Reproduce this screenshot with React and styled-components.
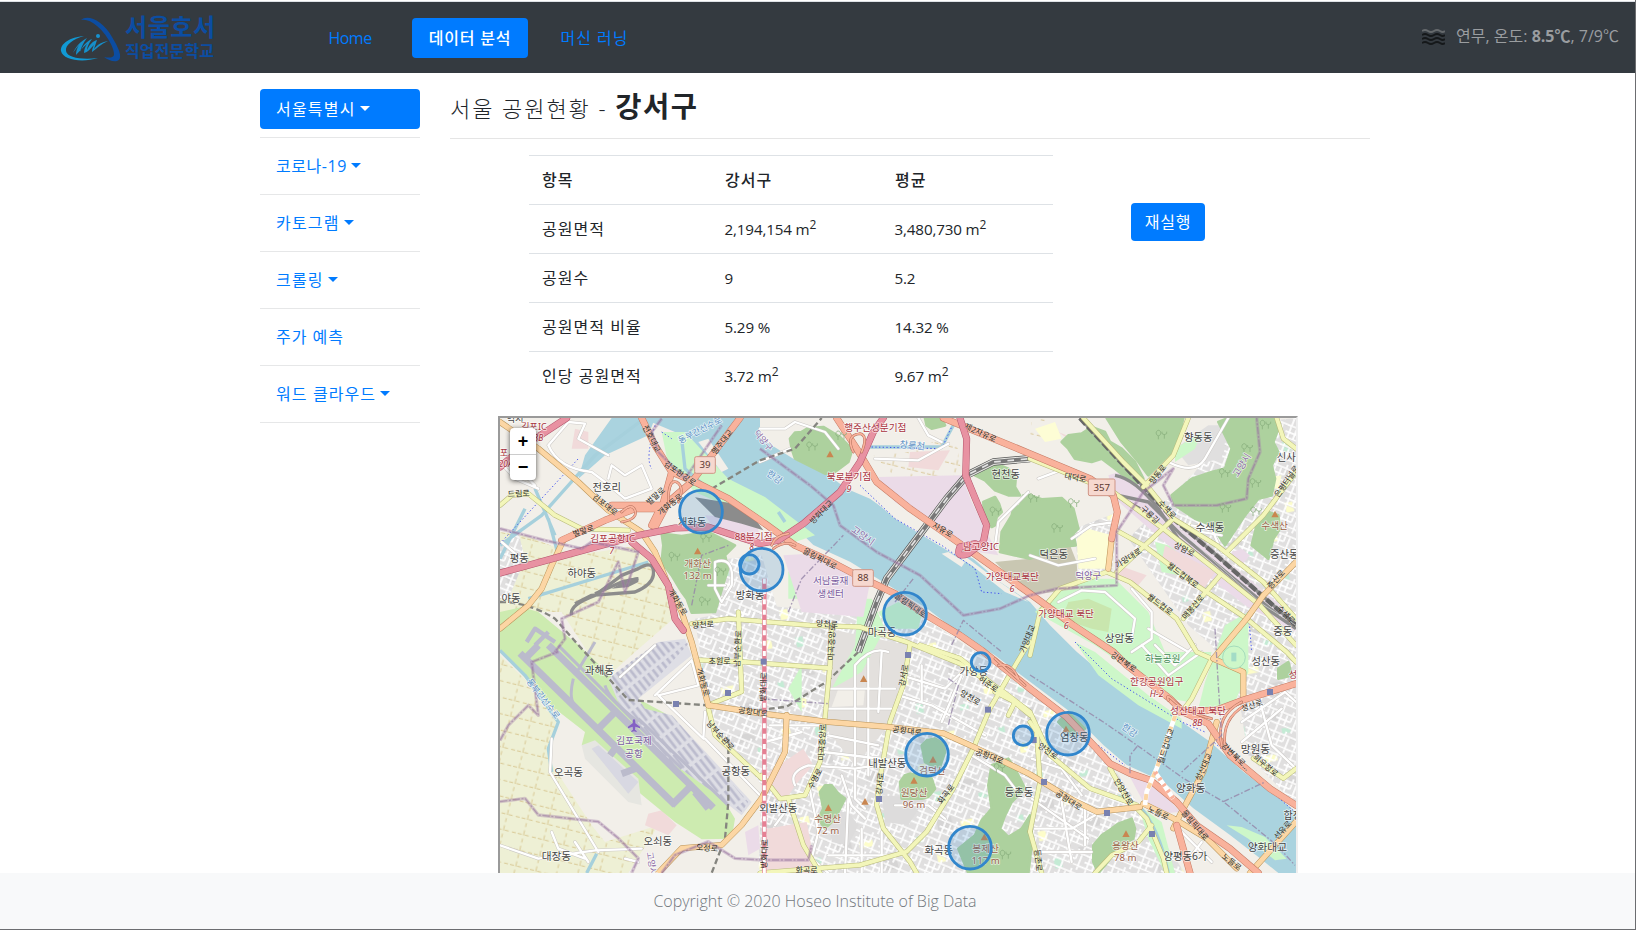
import React from 'react';
import styled, { createGlobalStyle } from 'styled-components';

const GlobalStyle = createGlobalStyle`
  * { box-sizing: border-box; }
  body {
    margin: 0;
    background: #fff;
    color: #212529;
    font: 350 16px/24px "Open Sans", "Noto Sans CJK KR", sans-serif;
    overflow: hidden;
  }
`;

const Page = styled.div`
  width: 1636px;
  height: 930px;
  display: flex;
  flex-direction: column;
  border-right: 1px solid #6c6d70;
  border-bottom: 1px solid #6c6d70;
`;
const TopStrip = styled.div`
  flex: none;
  height: 2px;
  border-bottom: 1px solid #dee1e6;
`;
const Navbar = styled.nav`
  flex: none;
  height: 71px;
  display: flex;
  align-items: flex-start;
  padding: 0 16px 0 60px;
  background: #343a40;
`;
const Logo = styled.svg`
  width: 156px;
  height: 50px;
  margin-top: 11px;
  overflow: visible;
`;
const NavList = styled.div`
  display: flex;
  margin: 16px 0 0 97px;
`;
const NavItem = styled.a`
  height: 40px;
  width: ${(p) => p.$w}px;
  margin-right: ${(p) => p.$gap || 0}px;
  padding: 8px 0;
  text-align: center;
  white-space: nowrap;
  border-radius: 4px;
  font-weight: ${(p) => (p.$active ? 500 : 400)};
  letter-spacing: ${(p) => p.$ls || 0}px;
  color: ${(p) => (p.$active ? '#fff' : '#007bff')};
  background: ${(p) => (p.$active ? '#007bff' : 'transparent')};
`;
const Weather = styled.div`
  margin: 22px 0 0 auto;
  display: flex;
  align-items: center;
  color: #9a9da0;
  font-weight: 400;
  white-space: nowrap;
  letter-spacing: 0px;
  svg { margin: 2px 11px 0 0; }
`;
const Body = styled.div`
  flex: 1;
  min-height: 0;
  overflow: hidden;
  display: flex;
  gap: 30px;
  padding: 16px 0 0 260px;
`;
const Sidebar = styled.aside`
  width: 160px;
  flex: none;
`;
const SideLink = styled.a`
  display: flex;
  align-items: center;
  height: 40px;
  padding: 0 16px;
  border-radius: 4px;
  font-weight: 400;
  letter-spacing: ${(p) => p.$ls ?? 1.2}px;
  white-space: nowrap;
  color: ${(p) => (p.$active ? '#fff' : '#007bff')};
  background: ${(p) => (p.$active ? '#007bff' : 'transparent')};
`;
const Caret = styled.span`
  margin: -2px 0 0 4px;
  border-top: 5px solid currentColor;
  border-left: 5px solid transparent;
  border-right: 5px solid transparent;
`;
const Divider = styled.hr`
  margin: 8px 0;
  border: 0;
  border-top: 1px solid #e6e7e8;
`;
const Main = styled.main`
  width: 920px;
  flex: none;
`;
const Title = styled.h3`
  margin: 0;
  height: 50px;
  display: flex;
  align-items: baseline;
  border-bottom: 1px solid #e5e5e5;
  font-size: 22px;
  font-weight: 300;
  line-height: 34px;
  letter-spacing: 1.95px;
  white-space: pre;
  strong { font-size: 28.5px; font-weight: 700; letter-spacing: 1.6px; }
`;
const StatsRow = styled.div`
  display: flex;
  align-items: flex-start;
  padding: 16px 0 0 79px;
  height: 277px;
`;
const Table = styled.table`
  width: 524px;
  table-layout: fixed;
  border-collapse: collapse;
`;
const Cell = styled.td`
  width: ${(p) => p.$w}px;
  height: 49px;
  padding: 0 12px 0 ${(p) => (p.$label ? 13 : 12.5)}px;
  border-top: 1px solid #dee2e6;
  font-size: ${(p) => (p.$label ? 16 : 15.2)}px;
  font-weight: ${(p) => (p.$head ? 500 : 400)};
  letter-spacing: ${(p) => (p.$label ? 1.05 : -0.15)}px;
  white-space: nowrap;
  sup { position: relative; top: -6px; vertical-align: baseline; font-size: 12px; line-height: 0; }
`;
const RunButton = styled.button`
  margin: 48px 0 0 78px;
  width: 74px;
  height: 38px;
  padding: 0 0 2px;
  border: 0;
  border-radius: 4px;
  font: 400 16px/24px "Noto Sans CJK KR", sans-serif;
  letter-spacing: 0.8px;
  color: #fff;
  background: #007bff;
`;
const MapFrame = styled.div`
  position: relative;
  width: 800px;
  height: 500px;
  margin-left: 48px;
  border: 2px solid #9a9a9a;
  border-right-color: #eee;
`;
const MapSvg = styled.svg`
  display: block;
  width: 796px;
  height: 455px;
  font-family: "Noto Sans", "Noto Sans CJK KR", sans-serif;
  font-weight: 400;
`;
const ZoomControl = styled.div`
  position: absolute;
  left: 10px;
  top: 10px;
  width: 26px;
  border-radius: 4px;
  background: #fff;
  box-shadow: 0 1px 5px rgba(0, 0, 0, 0.65);
`;
const ZoomButton = styled.div`
  height: 26px;
  text-align: center;
  font: 700 18px/26px "Liberation Sans", sans-serif;
  color: #000;
  & + & { border-top: 1px solid #ccc; line-height: 24px; }
`;
const Footer = styled.footer`
  flex: none;
  height: 56px;
  padding-right: 5px;
  line-height: 57px;
  text-align: center;
  background: #f8f9fa;
  color: #73787d;
  letter-spacing: 0px;
`;

/* ---- map data, in thirds of a pixel ---- */
const farms = [
  '15,360 90,370 240,430 440,400 500,460 535,620 420,720 330,800 200,600 15,600',
  '15,730 190,900 160,1040 290,1240 330,1290 490,1240 400,1383 15,1383',
];
const residential = [
  '600,620 810,580 1000,600 1290,620 1610,830 1850,1060 2070,1383 790,1383 800,1120 640,900',
  '700,440 800,430 850,600 640,640',
  '2020,260 2100,180 2200,40 2403,18 2403,1180 2260,1030 2230,850 2150,700 2080,640 1900,380',
  '1740,350 1870,300 1850,490 1750,480',
  '15,400 70,360 90,440 40,560 15,560',
];
const forests = [
  '500,365 560,372 640,360 720,400 690,430 700,470 690,500 672,560 660,600 590,602 575,560 560,540 530,490 500,450 505,400',
  '885,80 900,62 920,60 940,48 985,45 1010,60 1035,75 1060,100 1068,125 1060,150 1020,180 990,185 960,170 900,140 890,110',
  '1290,18 1340,18 1350,40 1310,50 1295,40',
  '1440,190 1460,165 1490,150 1515,160 1540,170 1562,200 1560,225 1575,250 1540,250 1500,235 1470,205',
  '1465,270 1500,255 1512,275 1520,300 1505,315 1500,340 1490,345 1468,320',
  '1515,420 1520,360 1550,310 1555,290 1575,280 1585,250 1605,250 1640,262 1700,258 1735,290 1750,350 1735,365 1742,400 1690,405 1605,440 1560,430',
  '1700,90 1720,70 1760,65 1790,45 1830,60 1845,90 1880,110 1920,150 1945,200 1920,218 1860,170 1820,140 1790,150 1740,140 1720,110',
  '1835,18 2065,18 2055,60 2040,110 2010,140 1960,190 1930,150 1880,90',
  '2170,30 2200,18 2345,18 2350,50 2335,90 2350,120 2330,160 2340,200 2330,250 2290,260 2250,310 2190,400 2150,340 2100,320 2040,280 2030,250 2090,200 2150,180 2190,170 2210,110',
  '2290,320 2320,300 2350,310 2355,350 2335,380 2320,440 2270,400',
  '1215,1110 1230,1090 1245,1085 1310,1100 1320,1130 1300,1155 1280,1160 1220,1160',
  '975,1140 990,1120 1010,1120 1030,1145 1050,1160 1035,1190 1020,1220 1000,1240 990,1250 970,1220 985,1190',
  '1280,1000 1295,985 1320,980 1345,995 1350,1020 1335,1065 1310,1060 1290,1050',
  '1490,1060 1540,1040 1560,1070 1590,1130 1550,1170 1530,1210 1515,1250 1540,1275 1580,1250 1605,1210 1612,1280 1600,1383 1420,1383 1390,1310 1440,1270 1460,1225 1490,1190 1480,1120',
  '1795,1300 1820,1270 1850,1250 1870,1235 1910,1220 1920,1250 1915,1280 1880,1300 1860,1320 1830,1360 1810,1383 1795,1350',
  '1690,930 1720,900 1770,950 1730,970', '2350,770 2380,750 2390,790 2350,800',
];
const parks = [
  '500,60 570,60 700,200 810,255 960,370 900,390 780,320 600,240 520,160',
  '1620,600 1680,540 1770,500 1860,500 1960,600 2010,720 2150,720 2130,780 2080,870 2030,860 1800,700',
  '2190,640 2260,600 2260,780 2210,890 2110,890 2130,810',
  '1930,1180 2000,1230 2040,1383 2010,1383 1960,1280',
  '1740,690 1800,720 1960,850 2060,920 2060,950 1930,880 1810,790',
  '1150,600 1210,570 1280,610 1270,650 1180,650',
  '1090,560 1130,560 1170,650 1100,780 1010,830 1080,700',
  '880,480 900,440 960,480 950,560 880,560',
  '880,830 920,760 920,900', '1980,390 2100,420 2110,500 2000,480',
  '2040,110 2120,60 2100,110 2040,150',
];
const pinks = [
  ['#ebdbe8', '865,430 940,425 1125,510 1105,615 920,600'],
  ['#ebdbe8', '1150,195 1400,190 1430,270 1510,430 1450,420 1340,360 1200,270'],
  ['#ebdbe8', '1840,190 1890,175 1960,220 2060,330 2380,600 2403,660 2250,580 2020,400 1860,260'],
  ['#ebdbe8', '1905,1095 1975,1110 2055,1200 1990,1205 1945,1170'],
  ['#ebdbe8', '630,310 780,320 800,390 650,340'],
  ['#ebdbe8', '2210,420 2240,410 2265,430 2240,460 2215,450'],
  ['#ebdbe8', '750,1260 790,1240 795,1310 760,1330'],
  ['#f1dada', '815,1085 925,1010 955,1060 900,1120 870,1170 840,1160'],
  ['#f1dada', '815,1250 935,1230 965,1383 815,1383'],
  ['#f1dada', '460,1205 500,1195 545,1240 520,1270 450,1240'],
  ['#f1dada', '1245,120 1365,115 1330,175 1240,165'],
  ['#f1dada', '2010,400 2160,480 2120,540 2000,450'],
  ['#f1dada', '1870,460 1955,490 1930,520 1870,495'],
  ['#f1dada', '240,50 280,60 280,110 230,110'],
  ['#f1dada', '1690,60 1840,120 1810,140 1760,110'],
  ['#c9c7b2', '1500,450 1605,440 1725,400 1745,450 1750,530 1600,550'],
  ['#fdfdd5', '1745,380 1780,350 1850,370 1840,470 1750,470'],
  ['#fdfdd5', '1620,50 1680,30 1700,80 1650,90'],
  ['#fdfdd5', '2290,200 2360,190 2350,230 2295,230'],
];
const motorways = [
  'M15 483L300 405 430 370 540 348 640 345 700 365 795 395 850 385 925 335 1035 240 1095 150 1135 60 1165 18',
  'M15 165L90 100 215 18',
  'M1395 18L1415 80 1412 190 1445 270 1475 340 1465 390 1420 425Q1380 440 1395 405L1440 395',
  'M410 390L470 440 520 520 540 620 565 655',
];
const trunks = [
  'M440 18L480 100 530 180 600 210 700 260 810 335 900 400 1000 445 1095 495 1200 545 1295 610 1395 670 1460 715 1605 830 1715 915 1805 1010 1845 1055 1905 1084 1965 1104 2045 1170 2105 1240 2205 1310 2290 1383',
  'M1025 18L1085 110 1145 210 1245 290 1345 360 1445 430 1605 545 1735 640 1855 720 1895 760 2025 860 2065 900 2140 935 2205 1030 2325 1130 2403 1180',
  'M735 18L590 210 520 270 480 345', 'M1345 18L1605 125 1785 200 1855 250 1867 300 1850 380',
  'M200 385L330 325 420 290 500 290 530 180', 'M2055 900L2165 894 2245 864 2403 815',
  'M2045 1240L2085 1383', 'M350 280H500L470 340',
];
const primaries = [
  'M15 30L130 110 250 210 340 295 440 360 480 420 520 520 560 600 590 690 640 880',
  'M205 385L170 460 140 530 100 580 15 650',
  'M640 880L795 904 995 929 1175 944 1345 964 1445 1009 1605 1087 1735 1165 1805 1199 1935 1185',
  'M490 1383L560 1309 680 1299 740 1239 800 1159 870 1020 875 909', 'M2403 1229L2265 1383',
  'M2165 930L2125 1079 2055 1209 2035 1249', 'M1945 1175L2035 1219 2135 1279 2225 1369',
  'M2403 450L2305 550 2255 620 2155 740 2245 780V860', 'M1850 380L1840 470',
];
const secondaries = [
  'M15 280L50 250 100 245 180 310 260 350 400 355',
  'M590 635L700 620 945 640 1095 645 1235 690 1395 755 1525 839 1605 900 1665 1029 1785 1129 1925 1179',
  'M1010 640L1005 760 988 940 975 1050 930 1150 855 1160 800 1090',
  'M1245 699L1225 819 1185 929 1155 1099 1145 1179 1165 1249 1245 1349 1265 1383',
  'M1605 690L1585 719 1485 889 1435 1009 1375 1129 1295 1259 1235 1319 1095 1359 795 1383',
  'M1275 699L1395 739 1495 819 1605 909', 'M880 1160L925 1299 975 1383',
  'M640 889L660 969 800 1099M640 879L740 839 730 600M610 744L740 749 1005 769',
  'M1765 18L1885 150 1955 220 2035 320 2165 400 2305 510 2403 620',
  'M2080 18L2035 130 1945 225M1605 140L1855 240 2005 350 2145 460 2295 580 2403 700',
  'M1855 350L1945 400 2105 520 2255 620 2375 720 2403 750M2035 320L1865 480',
  'M1605 730L1635 600 1695 530 1835 480 1905 510 2045 620 2105 720 2150 740 2090 860 2060 900',
  'M2195 420L2305 310 2403 180M2345 18L2365 80 2403 110M2065 620L2175 490',
  'M1845 1069L1895 1159 1955 1219 2005 1339 2015 1383M1605 1259L1635 1110 1625 960 1605 930',
  'M2275 1039L2365 1099 2403 1070', 'M1605 1259L1640 1383M1800 1383L1850 1330 1930 1290 1970 1240', 'M1500 840L1560 870 1540 910',
];
const whites = [
  'M160 100Q190 170 290 180L330 210 390 260 470 230 440 160 390 190 350 160 340 200M160 100L220 30 270 35 250 80 340 130M15 150L60 200 130 230M80 180L120 220M20 390L90 450 50 480',
  'M170 980L165 1080 310 1320M15 1300L130 1340 300 1315 440 1310M170 1260L190 1310 270 1340M240 1290L280 1350M390 1340L430 1350',
  'M480 850L590 745 610 820 490 850 625 980 630 900M630 980L800 1155M375 795L480 700',
  'M640 520H690M660 450Q720 430 710 520L680 570 660 530Z',
  'M795 50H870L900 30 990 60 1030 110M795 150L885 110',
  'M1140 140L1270 145 1360 95M1270 18L1300 70 1340 90',
  'M1605 430L1690 460 1800 440M1730 380L1790 340 1860 330M1630 200L1710 170 1780 210M1500 400L1510 330 1600 240',
  'M2020 150Q2100 190 2130 140L2200 18M2180 420L2150 350 2090 340M2060 350L2180 370',
  'M1690 570L1760 535 1830 540 1920 620 1910 680M1910 530L1970 600V680L1910 720M1980 699L2040 760 2100 699M1940 699L2020 790 2120 720M1960 650L2080 720',
  'M825 940H980M810 990L920 960M870 1200L840 1240M900 1120Q880 1080 940 1060L1080 1070 1140 1060M1080 760V1060M1120 740V1090M1160 720L1150 900M1000 830H1200M985 890H1190M1000 970L1150 1000M985 1020L1240 1050M1080 760Q1130 700 1180 720M1080 1070V1160L1110 1190',
  'M1210 850L1310 880 1470 970M1220 790L1350 830 1400 780M1280 870V760M1340 930L1400 790M1200 1180H1300L1350 1220M1430 1030L1530 1090 1560 1130',
  'M940 1110L970 1260 950 1340 1000 1383M1040 1090L1070 1180 1110 1220M1000 1330H1200M1060 1160L1050 1383M1100 1250V1383M1160 1260V1383',
  'M1610 1160L1780 1280M1620 1250H1730L1800 1210M1620 1320H1790M1700 1170L1730 1350M1770 1190L1770 1300M1610 1040L1700 1070 1760 1150M1630 970L1700 1030',
  'M2290 850L2330 1000 2403 1070M2240 930L2370 840 2403 870M2240 990L2360 890M2050 1250L2150 1350M2090 1330L2120 1290',
];
const doubleRails = [
  'M1090 720L1145 570 1175 500 1235 420 1355 260 1415 190 1495 150 1605 140',
];
const sideRails = ['M1605 140L1805 220 1935 290'];
const yardRails = [
  'M1755 18L1905 180 2035 320 2165 430 2403 640',
  'M1860 190Q1920 200 1990 290L2050 380 2300 580 2403 650',
  'M1870 250L1960 270 2060 370 2350 610',
  'M230 610Q220 580 300 550L380 490 430 470Q480 440 475 490 470 520 420 540L290 550 240 575',
  'M300 545L380 510 430 500',
];
const depots = ['600,256 700,272 780,320 805,355 740,335 660,315', '350,530 400,500 430,495 430,510 400,525'];
const tunnels = ['M15 570Q100 570 180 620L250 699 400 864 640 880', 'M1090 720L995 809 875 884 795 894', 'M700 980V1170L690 1280 650 1383', 'M650 230L795 145 900 110 980 18'];
const borders = [
  'M795 110L945 220 1015 280 1035 340 1145 420 1275 490 1405 610 1515 590 1605 550 1685 530 1865 520 1865 360 1945 240 2035 170 2005 220 2035 280 2165 280 2255 260 2260 200 2295 120 2285 18',
  'M15 350L150 385 260 410 290 390 430 420 390 540 370 450 310 570 200 620 210 680 180 720',
  'M15 1169L90 1159 130 1209 310 1229 370 1279 430 1339 410 1383', 'M500 1383L540 1329 640 1289 720 1339 800 1344H940L950 1300',
  'M15 985L40 940 100 880 130 910 110 750 190 719', 'M500 20L470 60 490 120 570 200 680 40',
];
const dashBorders = ['M1605 789L1825 930 1925 999 2065 1099 2185 1169 2345 1299 2400 1360', 'M880 600L920 500 1045 370', 'M1200 570L1255 500M1370 699L1405 625 1520 720', 'M2160 650L2170 820 2180 970 2060 1080', 'M795 860L1000 875', 'M1905 1084V1030L1930 999M2185 1169L2310 1110', 'M590 580L620 430 700 400', 'M1360 800L1390 820 1360 940'];
const streams = ['M15 715L90 790 190 930 160 1010 170 1080', 'M15 440L90 290M15 400L140 310 300 130 450 18', 'M100 560L460 450M160 320L190 430M305 1325L275 1383M120 230L180 370', 'M1120 105L1340 105 1375 40', 'M1930 1180Q1990 1240 2020 1383', 'M850 300L870 330M560 80L570 170 650 240'];
const runways = ['M75 724L540 1179', 'M160 699L655 1187', 'M90 740L130 700M310 950L360 900M530 1180L590 1120M380 1085L420 1070M600 1140L640 1190M345 1030L360 1010'];
const taxis = ['M190 700L560 1070M235 800Q220 860 240 880M240 790L300 690M330 820Q340 860 430 930M430 920L700 1180'];

const K = '#444', M = '#a93240', P = '#7a5ca0', B = '#9b624a';
const labels = [
  ['전호리', 335, 227, 31, K], ['평동', 73, 439, 31, K], ['하야동', 260, 484, 31, K], ['야동', 48, 560, 31, K], ['개화동', 591, 330, 31, K],
  ['방화동', 765, 549, 31, K], ['현천동', 1532, 187, 31, K], ['덕은동', 1676, 428, 31, K], ['향동동', 2110, 76, 31, K], ['신사', 2374, 136, 31, K],
  ['수색동', 2145, 345, 31, K], ['증산동', 2368, 427, 31, K], ['중동', 2363, 657, 31, K], ['상암동', 1873, 677, 32, K], ['마곡동', 1161, 660, 31, K],
  ['과해동', 313, 773, 32, K], ['오곡동', 220, 1079, 32, K], ['공항동', 722, 1079, 31, K], ['오쇠동', 488, 1289, 31, K], ['대장동', 184, 1331, 32, K],
  ['외발산동', 850, 1190, 31, K], ['내발산동', 1177, 1054, 31, K], ['가양동', 1436, 779, 31, K], ['등촌동', 1572, 1142, 31, K], ['화곡동', 1331, 1314, 31, K],
  ['염창동', 1738, 976, 31, K], ['성산동', 2312, 747, 31, K], ['망원동', 2281, 1010, 32, K], ['양화동', 2087, 1128, 32, K], ['양화대교', 2317, 1306, 32, K],
  ['양평동6가', 2071, 1332, 31, K], ['합정', 2393, 1211, 30, K], ['역시', 60, 20, 28, K],
  ['김포IC', 117, 44, 27, M], ['8B', 130, 79, 25, M], ['포', 27, 121, 27, M], ['20A', 32, 157, 25, M], ['김포공항IC', 353, 380, 29, M], ['7', 350, 417, 27, M],
  ['88분기점', 776, 373, 29, M], ['8', 770, 405, 25, M], ['행주산성분기점', 1141, 48, 29, M], ['북로분기점', 1062, 194, 29, M], ['9', 1062, 230, 27, M],
  ['남고양IC', 1458, 403, 29, M], ['가양대교북단', 1552, 494, 29, M], ['6', 1551, 530, 27, M], ['가양대교 북단', 1713, 605, 29, M], ['6', 1714, 641, 27, M],
  ['한강공원입구', 1985, 808, 29, M], ['H-2', 1985, 845, 27, M], ['성산대교 북단', 2109, 896, 29, M], ['8B', 2107, 933, 27, M], ['성', 2394, 789, 27, M],
  ['서남물재', 1007, 505, 29, P], ['생센터', 1007, 546, 29, P], ['김포국제', 417, 986, 29, P], ['공항', 417, 1024, 29, P], ['덕양구', 1780, 490, 28, P],
  ['개화산', 608, 454, 29, B], ['132 m', 608, 491, 29, B], ['수색산', 2339, 341, 29, B], ['수명산', 998, 1220, 29, B], ['72 m', 999, 1257, 29, B],
  ['원당산', 1257, 1142, 29, B], ['96 m', 1257, 1179, 29, B], ['검덕산', 1312, 1077, 29, B], ['봉제산', 1472, 1310, 29, B], ['117 m', 1472, 1347, 29, B],
  ['용왕산', 1891, 1301, 29, B], ['78 m', 1891, 1338, 29, B], ['하늘공원', 2003, 741, 29, '#438b57'],
  ['동부간선수로', 615, 54, 26, '#5c90c6', -27], ['한강', 839, 195, 27, '#5c90c6', 35], ['창릉천', 1252, 100, 28, '#5c90c6', 5], ['한강', 1904, 955, 27, '#5c90c6', 35],
  ['고양시', 1104, 371, 28, '#8b6ba5', 35], ['고양시', 2240, 159, 28, '#8b6ba5', -58], ['덕양구', 805, 85, 26, '#8b6ba5', 50], ['동부간선수로', 145, 860, 26, '#5c90c6', 52], ['고양시', 470, 1355, 26, '#8b6ba5', 80],
];
const roadLabels = [
  ['드림로', 71, 245, -3], ['벌말로', 265, 357, -18], ['김포대로', 330, 278, 38], ['벌말로', 482, 252, -42], ['개화동로', 525, 277, -38], ['전호대교', 470, 80, 62],
  ['김포한강로', 555, 184, 35], ['행주대교', 681, 90, -52], ['방화대교', 979, 300, -45], ['올림픽대로', 975, 440, 27], ['자유로', 1343, 354, 30], ['제2자유로', 1456, 62, 25],
  ['올림픽대로', 1247, 580, 35], ['개화동로', 548, 570, 60], ['양천로', 624, 638, -4], ['양천로', 996, 635, 2], ['마곡중앙로', 1010, 690, -88], ['초원로', 674, 747, 0],
  ['개화동로', 624, 810, 75], ['공항대로', 774, 899, 8], ['남부순환로', 676, 970, 48], ['방화대로', 805, 825, -88], ['오정로', 636, 1308, 4], ['강서로', 1226, 790, -80],
  ['허준로', 1480, 816, 35], ['양천로', 1426, 857, 30], ['마곡중앙로', 981, 990, -87], ['공항대로', 1236, 956, 7], ['공항대로', 1484, 1033, 20], ['강서로', 1155, 1115, -85],
  ['수명로', 960, 1100, -63], ['화곡로', 1353, 1146, -53], ['방화대로', 808, 1325, -88], ['화곡로', 935, 1374, 0], ['강변북로', 1886, 750, 35], ['성산로', 2271, 880, -18],
  ['월드컵대교', 2013, 1002, -72], ['성산대교', 2126, 1065, -65], ['강변북로…', 2222, 1034, 44], ['희우정로', 2312, 1060, 40], ['양천로', 1659, 1017, 35], ['공항대로', 1721, 1165, 33],
  ['안양천로', 1886, 1140, 60], ['노들로', 1990, 1203, 25], ['올림픽대로', 2100, 1240, 50], ['노들로', 2210, 1350, 38], ['선유로', 2363, 1254, -48], ['등촌로', 1630, 1345, 85],
  ['대덕로', 1741, 197, 10], ['구룡길', 1965, 308, 43], ['수색로', 2016, 292, 47], ['향동로', 1988, 187, -52], ['가양대로', 1900, 438, -32], ['상암로', 2068, 412, 27],
  ['월드컵북로', 2064, 490, 37], ['월드컵로', 1995, 577, 37], ['매봉산로', 2094, 585, -50], ['증산로', 2343, 502, -48], ['은평터널로', 2375, 208, -55], ['수색로', 2373, 608, 45],
  ['남부순환로', 728, 710, -88], ['가양대교', 1597, 680, -68],
];
const markers = [[618, 299, 65], [763, 457, 30], [800, 473, 65], [1230, 605, 65], [1457, 750, 29], [1584, 971, 30], [1296, 1028, 65], [1719, 965, 65], [1425, 1307, 65]];
const stations = [[543, 876], [699, 843], [806, 749], [1239, 729], [1479, 893], [1152, 1161], [1616, 984], [1647, 1110], [1836, 1203], [1971, 1266], [2325, 840]];
const peaks = [[608, 418], [1005, 127], [2340, 307], [1106, 801], [1000, 1188], [1257, 1106], [1110, 1169], [1314, 1043], [1468, 1276], [1713, 952], [1893, 1266]];
const shields = [['39', 630, 159, 62], ['88', 1104, 498, 62], ['357', 1820, 226, 80]];
const trees = [[632, 380], [537, 436], [628, 570], [950, 105], [1037, 72], [675, 480], [1735, 275], [1685, 350], [1500, 300], [1998, 70], [2188, 185], [2255, 110], [2190, 290], [2280, 215], [2310, 40], [1512, 1070], [2282, 300], [1615, 260], [1530, 1330]];

function Roads({ list, casing, color, width, edge = 3 }) {
  return (
    <g fill="none" strokeLinejoin="round" strokeLinecap="round">
      {list.map((d) => <path key={d} d={d} stroke={casing} strokeWidth={width + edge} />)}
      {list.map((d) => <path key={d + 'f'} d={d} stroke={color} strokeWidth={width} />)}
    </g>
  );
}
const Areas = ({ list, fill }) => <g fill={fill}>{list.map((p) => <polygon key={p} points={p} />)}</g>;
const Lines = ({ list, ...rest }) => <g fill="none" strokeLinejoin="round" {...rest}>{list.map((d) => <path key={d} d={d} />)}</g>;

function CityMap() {
  return (
    <MapSvg viewBox="15 18 2388 1365">
      <defs>
        <pattern id="streets" width="74" height="62" patternUnits="userSpaceOnUse" patternTransform="rotate(22)">
          <path d="M0 12H74M0 32H45M0 49H74M12 0V62M30 12V49M45 0V32M59 12V62" stroke="#fff" strokeWidth="5" fill="none" />
          <path d="M12 12H74M12 49H59" stroke="#c9c5c3" strokeWidth="1" fill="none" transform="translate(0 3)" />
        </pattern>
        <pattern id="lots" width="310" height="270" patternUnits="userSpaceOnUse" patternTransform="rotate(-12)">
          <path d="M20 30h28v26H20zM180 140h40v20h-40zM90 220h24v30H90z" fill="#fdfdca" />
          <path d="M120 40h22v30h-22zM40 160h18v18H40zM250 70h26v16h-26z" fill="#c4ebd5" />
          <path d="M200 20h50v26h-50zM110 120h46v40h-46zM240 200h40v40h-40z" fill="#d6d5d5" />
        </pattern>
        <pattern id="fields" width="62" height="48" patternUnits="userSpaceOnUse" patternTransform="rotate(14)">
          <path d="M0 10H62M18 0V48" stroke="#cdb373" strokeWidth="2" strokeDasharray="12 10" fill="none" />
        </pattern>
        <pattern id="aprons" width="18" height="60" patternUnits="userSpaceOnUse" patternTransform="rotate(-38)">
          <path d="M5 0V50" stroke="#bbbbcd" strokeWidth="8" />
        </pattern>
      </defs>
      <rect x="15" y="18" width="2388" height="1365" fill="#f2efe9" />
      <Areas list={farms} fill="#eef0d5" />
      <Areas list={farms} fill="url(#fields)" />
      <Areas list={['1135,130 1245,120 1380,60 1400,190 1200,195', '1610,30 1650,18 1640,120 1605,80']} fill="url(#fields)" />
      <Areas list={residential} fill="#e0dfdf" />
      <Areas list={residential} fill="url(#lots)" />
      <Areas list={residential} fill="url(#streets)" />
      <polygon points="1000,650 1240,700 1190,930 1080,1060 985,940" fill="#e3e0dd" />
      <polygon points="1030,830 1110,830 1105,880 1010,885" fill="#f2efe9" />
      <polygon points="1160,1150 1290,1160 1240,1240 1170,1230" fill="#dddcdc" />
      <polygon points="1000,1200 1060,1200 1090,1240 1060,1300 1010,1290" fill="#dddcdc" />
      <polygon points="2040,110 2140,40 2200,40 2180,140 2080,160" fill="#e0dfdf" />
      <Areas list={['440,18 795,18 795,78 895,140 995,185 1055,230 1125,260 1195,310 1265,360 1355,400 1435,440 1515,510 1605,570 1665,640 1745,719 1805,770 1905,829 2045,919 2145,989 2245,1079 2365,1169 2403,1200 2403,1383 2350,1383 2295,1339 2205,1269 2095,1189 2005,1109 1895,1059 1825,999 1725,899 1605,809 1500,730 1395,665 1295,589 1195,529 1065,449 955,399 880,325 795,262 700,200 600,120 540,60', '270,130 350,18 480,18 460,70 330,130 250,200']} fill="#aad3df" />
      <Areas list={parks} fill="#cdf7c9" />
      <Areas list={['2195,1240 2240,1245 2310,1275 2375,1340 2340,1345 2260,1280']} fill="#cdf7c9" />
      <Areas list={['610,90 640,80 700,170 680,180', '1340,425 1360,420 1410,450 1400,465', '1060,200 1100,230 1200,280 1380,410 1500,500 1600,570 1530,540 1430,460 1200,320']} fill="#f2efe9" />
      {pinks.map(([c, p]) => <polygon key={p} points={p} fill={c} />)}
      <g stroke="#add19e" strokeWidth="8" strokeLinejoin="round"><Areas list={forests} fill="#add19e" /></g>
      <Areas list={['1720,570 1780,560 1850,590 1840,660 1790,650 1700,620']} fill="#c9e6ae" />
      <polygon points="15,600 80,585 130,600 250,699 410,850 540,920 720,1220 710,1280 620,1282 540,1230 260,1000 270,960 180,890 15,720" fill="#cdebb0" />
      <polygon points="260,1000 300,985 430,1100 440,1180 400,1170 270,1040" fill="#e6e6e1" />
      <polygon points="290,1010 310,1000 430,1110 400,1145" fill="#d8d8e2" />
      <polygon points="340,800 490,690 570,680 590,730 430,860 450,890 530,910 770,1170 740,1210 640,1130 500,1030 370,870" fill="#dedee5" />
      <polygon points="350,790 490,690 585,690 430,860 450,890 530,910 760,1170 740,1200 640,1130 500,1030 370,870" fill="url(#aprons)" />
      <Lines list={taxis} stroke="#bbbbcc" strokeWidth="9" />
      <Lines list={['M95 690L120 650 180 690M120 700L160 660']} stroke="#bbbbcc" strokeWidth="13" />
      <Lines list={runways} stroke="#bbbbcc" strokeWidth="21" />
      <Lines list={streams} stroke="#a6d0dc" strokeWidth="10" />
      <Lines list={['M15 395L250 140M480 40Q450 140 470 170M500 60L530 80M1095 220L1200 320 1340 400 1440 470 1460 540 1520 545M1740 690L1850 800 2060 930 2130 960M2260 600L2270 720M1810 1000L1890 1060M2150 985L2400 1200M1130 105L1340 110 1370 45']} stroke="#4454ef" strokeWidth="3" strokeDasharray="4 7" />
      <Roads list={whites} casing="#cbc8c5" color="#fff" width={7} />
      <Lines list={tunnels} stroke="#85857f" strokeWidth="7" strokeDasharray="18 10" />
      <Areas list={depots} fill="#8c8c8c" />
      <Lines list={yardRails} stroke="#8c8c8c" strokeWidth="10" />
      <Lines list={['M1755 18L1905 180 2035 320 2165 430 2403 640']} stroke="#666" strokeWidth="14" strokeDasharray="26 8" />
      <Lines list={['M1765 18L1915 180 2045 320 2175 430 2403 630', 'M2060 360L2300 575 2403 640']} stroke="#ddd" strokeWidth="2" />
      <Lines list={sideRails} stroke="#777" strokeWidth="10" />
      <Lines list={sideRails} stroke="#ddd" strokeWidth="2" />
      <Lines list={doubleRails} stroke="#555" strokeWidth="22" />
      <Lines list={doubleRails} stroke="#e8e8e4" strokeWidth="18" />
      <Lines list={doubleRails} stroke="#777" strokeWidth="12" />
      <Lines list={doubleRails} stroke="#e4e4e4" strokeWidth="5" strokeDasharray="20 20" />
      <Roads list={secondaries} casing="#b6b878" color="#f3f6ba" width={12} />
      <Roads list={primaries} casing="#b99358" color="#fcd6a4" width={15} />
      <Roads list={trunks} casing="#c47a63" color="#f9b29c" width={18} />
      <Roads list={motorways} casing="#b2536b" color="#e892a2" width={18} />
      <Roads
        list={['M1075 120Q1050 70 1095 65 1120 70 1100 120', 'M830 400Q840 370 880 365M835 410Q870 385 900 400', 'M520 270Q520 200 545 210 570 225 550 270M380 300Q410 270 420 295T380 330', 'M2020 865Q2010 840 2040 870T2150 920', 'M2180 1000Q2160 910 2240 870M2190 1000Q2180 920 2250 880', 'M1500 740L1590 820M1510 760Q1550 750 1570 800']}
        casing="#b5705c" color="#f9b29c" width={5}
      />
      <Lines list={['M2041 910L1985 1069 1955 1139 1950 1179M1980 1080L2035 1160']} stroke="#fff" strokeWidth="14" />
      <Lines list={['M2041 910L1985 1069 1955 1139 1950 1179']} stroke="#fcd6a4" strokeWidth="12" strokeDasharray="18 18" />
      <Lines list={['M1980 1080L2035 1160']} stroke="#f9b29c" strokeWidth="14" strokeDasharray="8 14" />
      <Lines list={borders} stroke="#a583ab" strokeOpacity=".4" strokeWidth="10" />
      <Lines list={borders} stroke="#94709c" strokeOpacity=".5" strokeWidth="4" strokeDasharray="22 5 6 5" />
      <Lines list={dashBorders} stroke="#9584a8" strokeOpacity=".8" strokeWidth="4" strokeDasharray="18 6 5 6" />
      <path d="M808 500V1383" stroke="#e57f93" strokeWidth="13" />
      <path d="M808 500V1383" stroke="#fff" strokeWidth="9" strokeDasharray="15 16" />
      <circle cx="2217" cy="736" r="34" fill="#cdf7c9" stroke="#a5dcbc" strokeWidth="3" />
      <rect x="2209" y="722" width="15" height="26" fill="#a3dcc6" />
      <g fill="none" stroke="#86ad7b" strokeWidth="2.2">
        {trees.map(([x, y]) => <path key={x + '-' + y} d={`M${x - 8} ${y + 12}v-11a7 8 0 1 1 1 0M${x + 10} ${y + 10}v-13m-7-8v6q7 6 14 0v-6`} />)}
      </g>
      <g fill="#c98650">{peaks.map(([x, y]) => <path key={x} d={`M${x} ${y - 11}l11 20h-22z`} />)}</g>
      <g fill="#7981b0">{stations.map(([x, y]) => <rect key={x} x={x - 9} y={y - 9} width="18" height="18" />)}</g>
      <path d="M417 922c4 0 4 6 4 12l14 10v5l-14-5-1 9 5 4v3l-8-2-8 2v-3l5-4-1-9-14 5v-5l14-10c0-6 0-12 4-12z" fill="#8461c4" />
      {shields.map(([t, x, y, w]) => (
        <g key={t}>
          <rect x={x - w / 2} y={y - 25} width={w} height="50" rx="5" fill="#f6d8cf" stroke="#cf9585" strokeWidth="3" />
          <text x={x} y={y + 10} textAnchor="middle" fontSize="29" fill="#5d392f">{t}</text>
        </g>
      ))}
      <g textAnchor="middle" fontSize="24" fill="#2b2a22" stroke="#fff" strokeOpacity=".25" strokeWidth="3" paintOrder="stroke">
        {roadLabels.map(([t, x, y, r], i) => <text key={i} transform={`translate(${x} ${y}) rotate(${r})`} y="8.5">{t}</text>)}
      </g>
      <g textAnchor="middle" stroke="#fff" strokeOpacity=".65" strokeWidth="5" strokeLinejoin="round" paintOrder="stroke">
        {labels.map(([t, x, y, s, c, r], i) => (
          <text key={i} transform={`translate(${x} ${y}) rotate(${r || 0})`} y={s * 0.36} fontSize={s} fill={c} fontStyle={c === M && /^[0-9A-Z-]+$/.test(t) ? 'italic' : 'normal'}>{t}</text>
        ))}
      </g>
      <g fill="#3186cc" fillOpacity=".2" stroke="#3186cc" strokeWidth="8.5">
        {markers.map(([x, y, r]) => <circle key={x} cx={x} cy={y} r={r - 1} />)}
      </g>
    </MapSvg>
  );
}

function SchoolLogo() {
  return (
    <Logo viewBox="0 0 156 50">
      <path d="M21 7C28 1 43 8 52 24c8 13 11 22 5 24-4 1-9-1-13-4 5 1 9 1 10-2 1-6-8-22-17-29C31 8 26 6 21 7z" fill="#0c4da2" />
      <path d="M24 23C10 24 0 31 1 38c2 9 21 12 37 7-15 2-31 0-32-7-1-6 7-12 18-15z" fill="#1199d4" />
      <path d="M13 40c3-7 8-12 14-15-4 5-6 10-7 14 3-7 7-11 12-13-3 4-5 8-5 11 3-6 6-9 10-10l-3 9c4-5 8-7 14-8-7 3-12 8-16 11 0-3 1-5 2-7-4 4-6 7-10 8 0-3 1-6 3-9-5 4-8 8-11 11 0-4 1-7 3-10-2 2-4 5-6 8z" fill="#168fca" />
      <circle cx="38" cy="23" r="2" fill="#1692d0" />
      <g fill="#0c4da2" fontFamily="Noto Sans CJK KR" fontWeight="700">
        <text x="65" y="23" fontSize="24" textLength="90">서울호서</text>
        <text x="65" y="44" fontSize="16" textLength="89">직업전문학교</text>
      </g>
    </Logo>
  );
}

const menu = [['서울특별시', true], ['코로나-19', true, 0.55], ['카토그램', true], ['크롤링', true], ['주가 예측', false, 1], ['워드 클라우드', true, 1.1]];
const rows = [
  ['공원면적', '2,194,154 m', '3,480,730 m', true],
  ['공원수', '9', '5.2'],
  ['공원면적 비율', '5.29 %', '14.32 %'],
  ['인당 공원면적', '3.72 m', '9.67 m', true],
];

export default function App() {
  return (
    <>
      <GlobalStyle />
      <Page>
        <TopStrip />
        <Navbar>
          <SchoolLogo />
          <NavList>
            <NavItem $w={74} $gap={25} $ls={-0.5}>Home</NavItem>
            <NavItem $w={116} $gap={17} $active $ls={0.8}>데이터 분석</NavItem>
            <NavItem $w={99} $ls={1}>머신 러닝</NavItem>
          </NavList>
          <Weather>
            <svg width="23" height="16" viewBox="0 0 23 16" fill="none" strokeWidth="1.8">
              <path d="M0 2q3-2 6 0t6 0 6 0 5 0" stroke="#65696c" />
              <path d="M0 6q3-2 6 0t6 0 6 0 5 0M0 10q3-2 6 0t6 0 6 0 5 0M0 14q3-2 6 0t6 0 6 0 5 0" stroke="#15181a" />
            </svg>
            <span>연무, 온도: <b>8.5℃</b>, 7/9℃</span>
          </Weather>
        </Navbar>
        <Body>
          <Sidebar>
            {menu.map(([t, caret, ls], i) => (
              <React.Fragment key={t}>
                <SideLink $active={i === 0} $ls={ls}>{t}{caret && <Caret />}</SideLink>
                <Divider />
              </React.Fragment>
            ))}
          </Sidebar>
          <Main>
            <Title>서울 공원현황 - <strong>강서구</strong></Title>
            <StatsRow>
              <Table>
                <tbody>
                  <tr>
                    <Cell as="th" align="left" $w={183} $label $head>항목</Cell>
                    <Cell as="th" align="left" $w={170} $label $head>강서구</Cell>
                    <Cell as="th" align="left" $w={171} $label $head>평균</Cell>
                  </tr>
                  {rows.map(([n, a, b, sup]) => (
                    <tr key={n}>
                      <Cell $label>{n}</Cell>
                      <Cell>{a}{sup && <sup>2</sup>}</Cell>
                      <Cell>{b}{sup && <sup>2</sup>}</Cell>
                    </tr>
                  ))}
                </tbody>
              </Table>
              <RunButton>재실행</RunButton>
            </StatsRow>
            <MapFrame>
              <CityMap />
              <ZoomControl>
                <ZoomButton>+</ZoomButton>
                <ZoomButton>−</ZoomButton>
              </ZoomControl>
            </MapFrame>
          </Main>
        </Body>
        <Footer>Copyright © 2020 Hoseo Institute of Big Data</Footer>
      </Page>
    </>
  );
}
